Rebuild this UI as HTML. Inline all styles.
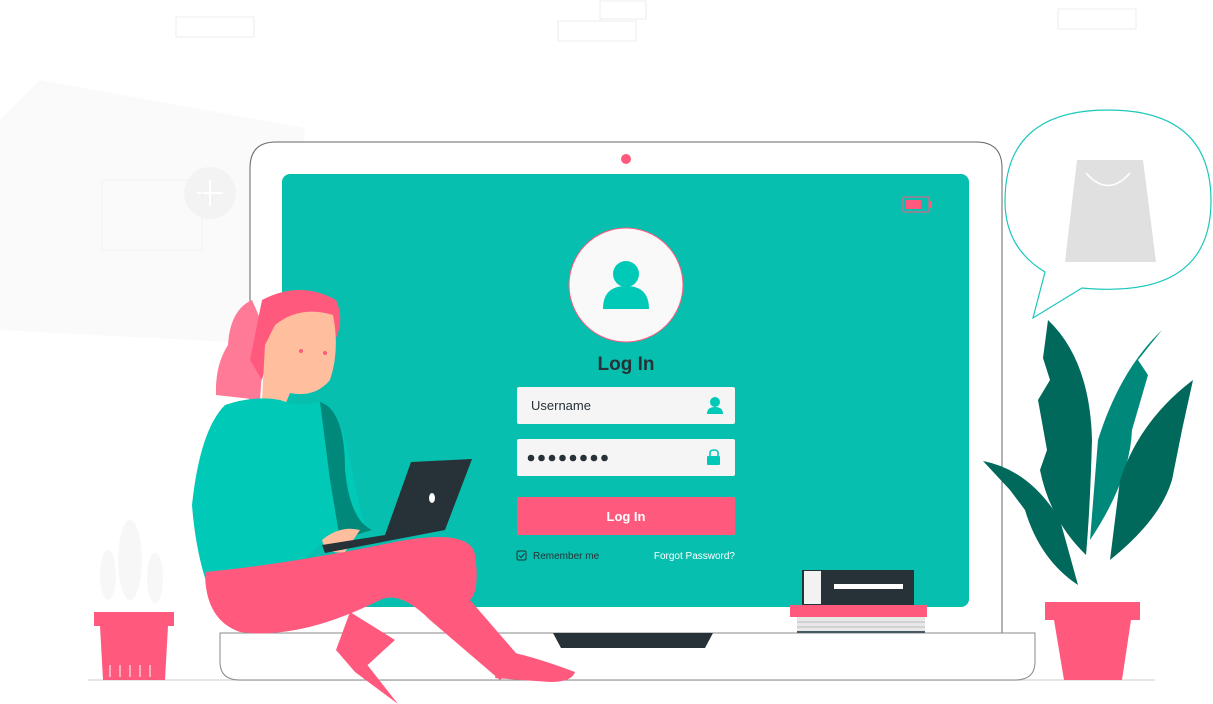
<!DOCTYPE html>
<html><head><meta charset="utf-8"><style>
html,body{margin:0;padding:0;background:#fff;width:1213px;height:704px;overflow:hidden}
svg{display:block}
text{font-family:"Liberation Sans",sans-serif}
</style></head><body>
<svg width="1213" height="704" viewBox="0 0 1213 704" xmlns="http://www.w3.org/2000/svg">
<!-- faint background -->
<g fill="none" stroke="#ececec" stroke-width="1">
<rect x="176" y="17" width="78" height="20"/>
<rect x="558" y="21" width="78" height="20"/>
<rect x="600" y="1" width="46" height="18"/>
<rect x="1058" y="9" width="78" height="20"/>
</g>
<path d="M40 80 L305 128 L285 345 L0 330 L0 120 Z" fill="#fafafa"/>
<circle cx="210" cy="193" r="26" fill="#f3f3f3"/>
<path d="M210 180v26M197 193h26" stroke="#fff" stroke-width="2"/>
<rect x="102" y="180" width="100" height="70" fill="none" stroke="#f1f1f1"/>
<!-- ground -->
<line x1="88" y1="680" x2="1155" y2="680" stroke="#ddd" stroke-width="1.5"/>
<!-- laptop -->
<path d="M276 142 H976 Q1002 142 1002 168 V634 H250 V168 Q250 142 276 142Z" fill="#fff" stroke="#666" stroke-width="1"/>
<rect x="282" y="174" width="687" height="433" rx="8" fill="#07bfae"/>
<circle cx="626" cy="159" r="5" fill="#ff5a7e"/>
<path d="M220 633 H1035 V662 Q1035 680 1015 680 H240 Q220 680 220 662Z" fill="#fff" stroke="#888" stroke-width="1"/>
<path d="M553 633 H713 L705 648 H561Z" fill="#263238"/>
<!-- battery -->
<rect x="903" y="197" width="26" height="15" rx="1" fill="none" stroke="#ff5a7e" stroke-width="1"/>
<rect x="929" y="201" width="3" height="7" fill="#ff5a7e"/>
<rect x="906" y="200" width="15" height="9" fill="#ff5a7e"/>
<!-- avatar -->
<circle cx="626" cy="285" r="57" fill="#f9f9f9" stroke="#ff5a7e" stroke-width="1"/>
<circle cx="626" cy="274" r="13" fill="#00c9b7"/>
<path d="M603 309 Q603 286 626 286 Q649 286 649 309Z" fill="#00c9b7"/>
<text x="626" y="370" font-size="19" font-weight="bold" fill="#263238" text-anchor="middle">Log In</text>
<rect x="517" y="387" width="218" height="37" rx="2" fill="#f5f5f5"/>
<text x="531" y="410" font-size="13" fill="#263238">Username</text>
<circle cx="715" cy="402" r="5" fill="#00c9b7"/>
<path d="M707 414 Q707 407 715 407 Q723 407 723 414Z" fill="#00c9b7"/>
<rect x="517" y="439" width="218" height="37" rx="2" fill="#f5f5f5"/>
<g fill="#263238"><circle cx="531" cy="458" r="3.3"/><circle cx="541.5" cy="458" r="3.3"/><circle cx="552" cy="458" r="3.3"/><circle cx="562.5" cy="458" r="3.3"/><circle cx="573" cy="458" r="3.3"/><circle cx="583.5" cy="458" r="3.3"/><circle cx="594" cy="458" r="3.3"/><circle cx="604.5" cy="458" r="3.3"/></g>
<path d="M710 456 V453 Q710 450 714 450 Q718 450 718 453 V456" fill="none" stroke="#00c9b7" stroke-width="1.6"/>
<rect x="707" y="456" width="13" height="9" rx="1" fill="#00c9b7"/>
<rect x="517" y="497" width="218" height="38" rx="2" fill="#ff5a7e"/>
<text x="626" y="521" font-size="13" font-weight="bold" fill="#fff" text-anchor="middle">Log In</text>
<rect x="517" y="551" width="9" height="9" rx="1.5" fill="none" stroke="#263238" stroke-width="1"/>
<path d="M519 555.5 l2 2 l3.5 -4" fill="none" stroke="#263238" stroke-width="1"/>
<text x="533" y="559" font-size="10" fill="#263238">Remember me</text>
<text x="735" y="559" font-size="10" fill="#fff" text-anchor="end">Forgot Password?</text>
<!-- books -->
<rect x="797" y="617" width="128" height="16" fill="#e8e8e8"/>
<path d="M797 622H925M797 627H925" stroke="#bbb"/>
<rect x="797" y="631" width="128" height="2" fill="#455a64"/>
<rect x="790" y="605" width="137" height="12" fill="#ff5a7e"/>
<rect x="802" y="570" width="112" height="35" fill="#263238"/>
<rect x="804" y="571" width="17" height="33" fill="#f2f2f2"/>
<rect x="834" y="584" width="69" height="5" fill="#fff"/>
<!-- speech bubble -->
<path d="M1045 272 Q1005 248 1005 201 Q1005 110 1108 110 Q1211 110 1211 201 Q1211 300 1082 288 L1033 318 Z" fill="#fff" stroke="#1cc8bb" stroke-width="1.2"/>
<path d="M1077 160 H1143 L1156 262 H1065Z" fill="#e0e0e0"/>
<path d="M1086 173 Q1108 198 1130 173" fill="none" stroke="#fff" stroke-width="1.5"/>
<!-- right plant -->
<path d="M1048 320 Q1090 360 1092 440 Q1090 510 1086 555 Q1050 520 1040 470 L1047 450 L1038 400 L1050 380 L1043 358Z" fill="#00695c"/>
<path d="M1162 330 Q1120 370 1098 440 L1090 540 Q1130 480 1132 430 L1148 375 L1138 360Z" fill="#00897b"/>
<path d="M1193 380 Q1140 420 1120 480 L1110 560 Q1160 520 1172 480 L1182 430Z" fill="#00695c"/>
<path d="M983 461 Q1030 470 1060 520 L1078 585 Q1040 560 1025 510 L1010 490Z" fill="#00695c"/>
<rect x="1045" y="602" width="95" height="18" fill="#ff5a7e"/>
<path d="M1054 620 H1131 L1122 680 H1064Z" fill="#ff5a7e"/>
<!-- left plant -->
<g fill="#f7f7f7"><ellipse cx="130" cy="560" rx="12" ry="40"/><ellipse cx="108" cy="575" rx="8" ry="25"/><ellipse cx="155" cy="578" rx="8" ry="25"/></g>
<rect x="94" y="612" width="80" height="14" fill="#ff5a7e"/>
<path d="M100 626 H168 L165 680 H103Z" fill="#ff5a7e"/>
<path d="M110 665v12M120 665v12M130 665v12M140 665v12M150 665v12" stroke="#fff" stroke-width="1"/>
<!-- girl -->
<path d="M252 300 Q230 310 228 345 Q215 365 216 395 L260 400 L265 330Z" fill="#ff7a96"/>
<path d="M262 300 Q300 280 336 300 Q345 320 335 340 L270 345 L262 380 L250 360Z" fill="#ff5a7e"/>
<path d="M275 325 Q300 305 333 315 Q340 350 330 380 Q315 398 290 393 L285 405 L262 400 L265 345Z" fill="#ffbe9d"/>
<circle cx="301" cy="351" r="2" fill="#ff5a7e"/><circle cx="325" cy="353" r="2" fill="#ff5a7e"/>
<path d="M225 405 Q255 395 280 400 Q300 408 320 402 Q345 420 352 470 Q360 510 365 525 L320 545 L295 568 L205 578 Q195 545 192 505 Q200 430 225 405Z" fill="#00c9b7"/>
<path d="M320 402 Q345 410 345 470 Q350 520 372 530 L340 540 L330 480Z" fill="#00897b"/>
<path d="M205 572 Q280 565 380 545 Q470 525 475 555 Q480 590 470 600 L522 660 L500 680 L430 620 Q400 590 380 600 Q300 640 240 632 Q205 620 205 572Z" fill="#ff5a7e"/>
<path d="M350 612 L395 640 L360 672 L336 650Z" fill="#ff5a7e"/>
<path d="M336 650 L365 662 L398 704 L355 672Z" fill="#ff5a7e"/>
<path d="M500 650 Q530 655 575 672 Q572 682 550 682 L495 678Z" fill="#ff5a7e"/>
<path d="M322 540 Q340 525 360 530 L345 552 Q325 555 322 540Z" fill="#ffbe9d"/>
<path d="M411 462 L472 459 L445 530 L325 553 L322 545 L385 535Z" fill="#263238"/>
<ellipse cx="432" cy="498" rx="3" ry="5" fill="#fff"/>
</svg>
</body></html>
